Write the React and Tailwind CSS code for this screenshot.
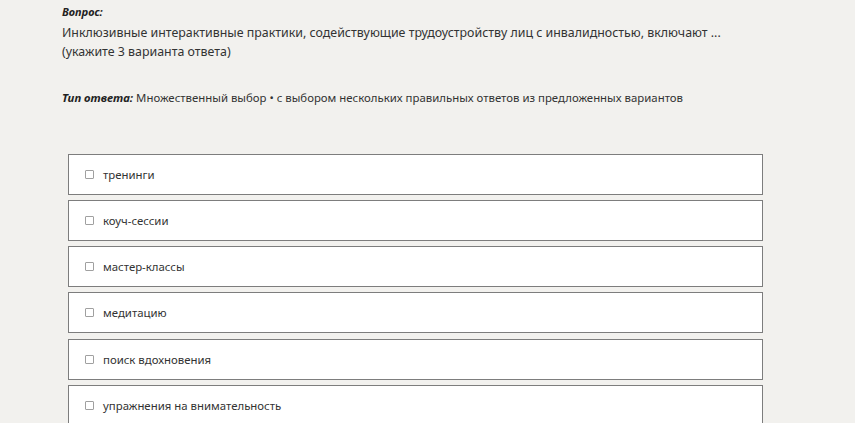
import React from "react"

const options = [
  "тренинги",
  "коуч-сессии",
  "мастер-классы",
  "медитацию",
  "поиск вдохновения",
  "упражнения на внимательность",
]

export default function App() {
  return (
    <div
      className="min-h-screen bg-[#f2f1ee] text-[#333] text-[12.4px] leading-[19px]"
      style={{ fontFamily: '"Noto Sans", "Open Sans", sans-serif' }}
    >
      <div className="pl-[62px] pt-[2px]">
        <p className="font-bold italic text-[11px] text-[#222]">Вопрос:</p>
        <p className="mt-[2px]">
          Инклюзивные интерактивные практики, содействующие трудоустройству лиц с инвалидностью, включают ...
        </p>
        <p>(укажите 3 варианта ответа)</p>
        <p className="mt-[27px] text-[11.4px]">
          <span className="font-bold italic text-[#222]">Тип ответа:</span> Множественный выбор • с выбором
          нескольких правильных ответов из предложенных вариантов
        </p>
      </div>

      <div className="ml-[68px] mt-[47px] w-[695px] flex flex-col gap-[5px]">
        {options.map((opt, i) => (
          <label
            key={opt}
            className={
              "h-[41px] bg-white border border-[#7d7d7d] flex items-center pl-[16px] gap-[9px] text-[11.4px]" +
              (i === 4 ? " mt-[1px]" : "")
            }
          >
            <span className="w-[9px] h-[9px] border border-[#a0a0a0] rounded-[1px] bg-white" />
            <span>{opt}</span>
          </label>
        ))}
      </div>
    </div>
  )
}
